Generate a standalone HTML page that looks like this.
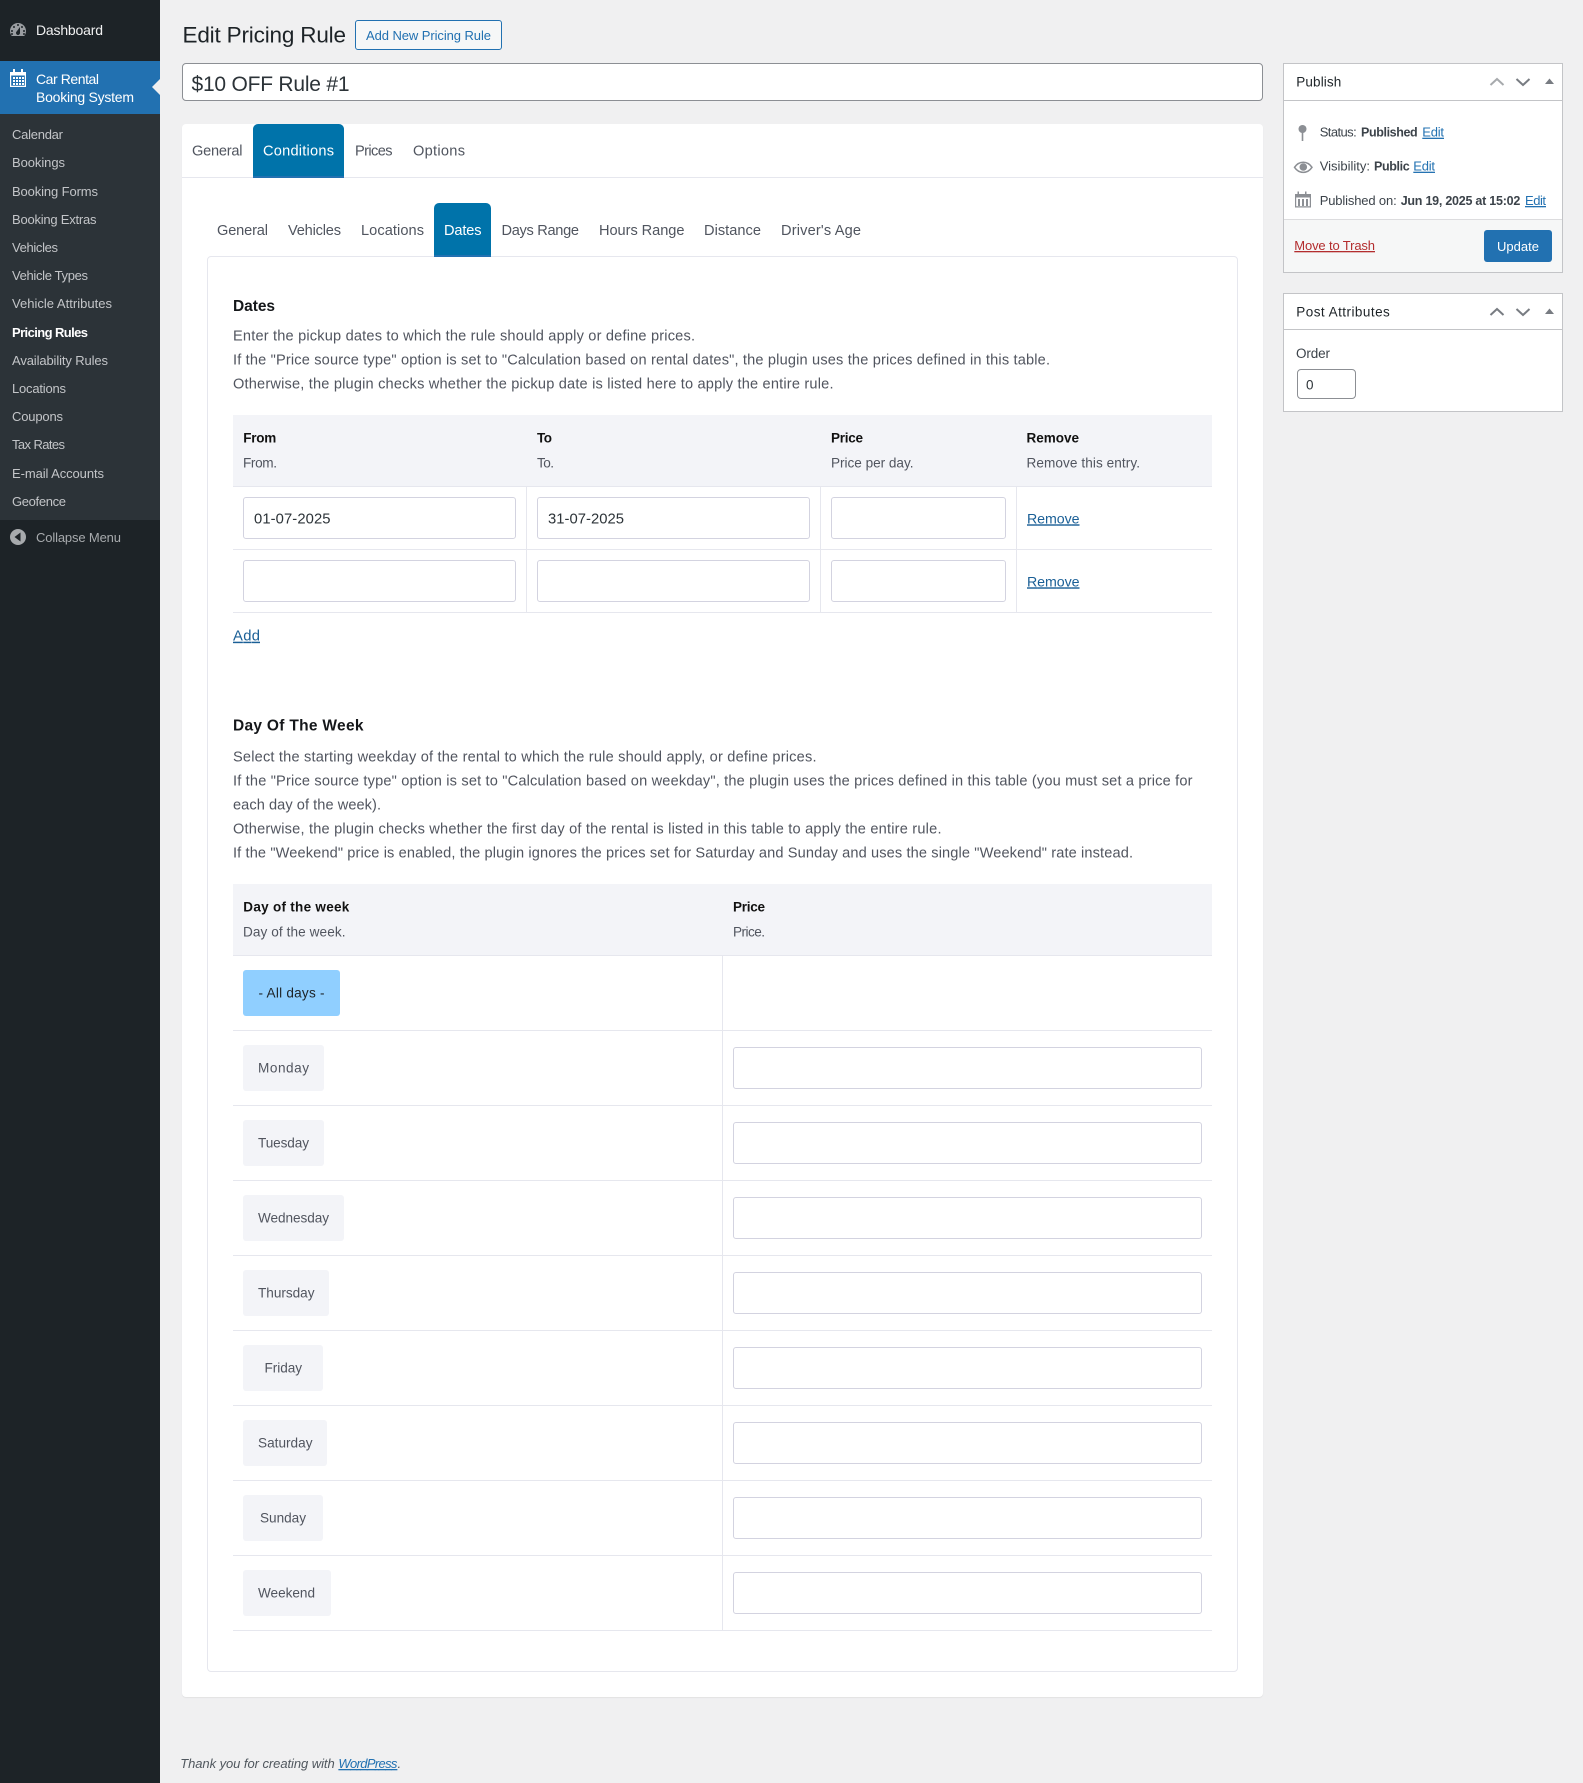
<!DOCTYPE html>
<html lang="en">
<head>
<meta charset="utf-8">
<title>Edit Pricing Rule</title>
<style>
html,body{margin:0;padding:0;width:1583px;height:1783px;overflow:hidden;background:#f0f0f1;font-family:"Liberation Sans",sans-serif}
.b{position:absolute;box-sizing:border-box}
input.b{background:#fff;border:1px solid #d3d3e0;border-radius:3px;margin:0;padding:0;outline:0}
.pill{background:#f3f4f8;border-radius:3px}
.ln{background:#e6e7ee}
svg.t{position:absolute;left:0;top:0;pointer-events:none}
svg text{font-family:"Liberation Sans",sans-serif;font-size:14.6px;fill:#51555f;white-space:pre}
.m{font-size:13px;fill:#c3c5c8}
.s{font-size:13.6px}
.h{font-size:13.5px;font-weight:bold;fill:#111}
.tb{font-size:14.6px;fill:#50555f}
.hd{font-size:15.5px;font-weight:bold;fill:#15171a}
.lk{font-size:14.2px;fill:#1a5f96;text-decoration:underline}
.sd{font-size:13px;fill:#3c434a}
.sl{font-size:13px;fill:#2271b1;text-decoration:underline}
.sb{font-size:12.5px;fill:#3c434a;font-weight:bold}
</style>
</head>
<body>
<!-- sidebar -->
<div class="b" style="left:0;top:0;width:160px;height:1783px;background:#1d2327"></div>
<div class="b" style="left:0;top:61px;width:160px;height:53px;background:#2271b1"></div>
<div class="b" style="left:0;top:114px;width:160px;height:406px;background:#2c3338"></div>

<!-- header button + title -->
<div class="b" style="left:355px;top:20px;width:147px;height:30px;border:1px solid #2271b1;border-radius:3px;background:#f6f7f7"></div>
<div class="b" style="left:182px;top:63px;width:1081px;height:38px;border:1px solid #8c8f94;border-radius:4px;background:#fff"></div>

<!-- main panel -->
<div class="b" style="left:182px;top:124px;width:1081px;height:1573px;background:#fff;border-radius:4px;box-shadow:0 1px 1px rgba(0,0,0,.06)"></div>
<div class="b ln" style="left:182px;top:177px;width:1081px;height:1px"></div>
<div class="b" style="left:253px;top:124px;width:91px;height:54px;background:#0073aa;border-radius:5px 5px 0 0;border-bottom:2px solid #2271b1"></div>
<div class="b" style="left:207px;top:256px;width:1031px;height:1416px;border:1px solid #e6e7ee;border-radius:4px;background:#fff"></div>
<div class="b" style="left:434px;top:203px;width:57px;height:54px;background:#0073aa;border-radius:5px 5px 0 0;border-bottom:2px solid #2271b1"></div>

<!-- dates table -->
<div class="b" style="left:233px;top:415px;width:979px;height:71px;background:#f3f4f8"></div>
<div class="b ln" style="left:233px;top:486px;width:979px;height:1px"></div>
<div class="b ln" style="left:233px;top:549px;width:979px;height:1px"></div>
<div class="b ln" style="left:233px;top:612px;width:979px;height:1px"></div>
<div class="b ln" style="left:526px;top:487px;width:1px;height:125px"></div>
<div class="b ln" style="left:820px;top:487px;width:1px;height:125px"></div>
<div class="b ln" style="left:1016px;top:487px;width:1px;height:125px"></div>
<input class="b" readonly style="left:243px;top:497px;width:273px;height:42px">
<input class="b" readonly style="left:537px;top:497px;width:273px;height:42px">
<input class="b" readonly style="left:831px;top:497px;width:175px;height:42px">
<input class="b" readonly style="left:243px;top:560px;width:273px;height:42px">
<input class="b" readonly style="left:537px;top:560px;width:273px;height:42px">
<input class="b" readonly style="left:831px;top:560px;width:175px;height:42px">

<!-- weekday table -->
<div class="b" style="left:233px;top:884px;width:979px;height:71px;background:#f3f4f8"></div>
<div class="b ln" style="left:233px;top:955px;width:979px;height:1px"></div>
<div class="b ln" style="left:722px;top:956px;width:1px;height:675px"></div>
<div class="b ln" style="left:233px;top:1030px;width:979px;height:1px"></div>
<div class="b ln" style="left:233px;top:1105px;width:979px;height:1px"></div>
<div class="b ln" style="left:233px;top:1180px;width:979px;height:1px"></div>
<div class="b ln" style="left:233px;top:1255px;width:979px;height:1px"></div>
<div class="b ln" style="left:233px;top:1330px;width:979px;height:1px"></div>
<div class="b ln" style="left:233px;top:1405px;width:979px;height:1px"></div>
<div class="b ln" style="left:233px;top:1480px;width:979px;height:1px"></div>
<div class="b ln" style="left:233px;top:1555px;width:979px;height:1px"></div>
<div class="b ln" style="left:233px;top:1630px;width:979px;height:1px"></div>
<div class="b" style="left:243px;top:970px;width:97px;height:46px;background:#90cfff;border-radius:3px"></div>
<div class="b pill" style="left:243px;top:1045px;width:81px;height:46px"></div>
<div class="b pill" style="left:243px;top:1120px;width:81px;height:46px"></div>
<div class="b pill" style="left:243px;top:1195px;width:101px;height:46px"></div>
<div class="b pill" style="left:243px;top:1270px;width:86px;height:46px"></div>
<div class="b pill" style="left:243px;top:1345px;width:80px;height:46px"></div>
<div class="b pill" style="left:243px;top:1420px;width:84px;height:46px"></div>
<div class="b pill" style="left:243px;top:1495px;width:80px;height:46px"></div>
<div class="b pill" style="left:243px;top:1570px;width:88px;height:46px"></div>
<input class="b" readonly style="left:733px;top:1047px;width:469px;height:42px">
<input class="b" readonly style="left:733px;top:1122px;width:469px;height:42px">
<input class="b" readonly style="left:733px;top:1197px;width:469px;height:42px">
<input class="b" readonly style="left:733px;top:1272px;width:469px;height:42px">
<input class="b" readonly style="left:733px;top:1347px;width:469px;height:42px">
<input class="b" readonly style="left:733px;top:1422px;width:469px;height:42px">
<input class="b" readonly style="left:733px;top:1497px;width:469px;height:42px">
<input class="b" readonly style="left:733px;top:1572px;width:469px;height:42px">

<!-- side boxes -->
<div class="b" style="left:1283px;top:63px;width:280px;height:210px;background:#fff;border:1px solid #c3c4c7"></div>
<div class="b" style="left:1284px;top:100px;width:278px;height:1px;background:#c3c4c7"></div>
<div class="b" style="left:1284px;top:219px;width:278px;height:53px;background:#f6f7f7;border-top:1px solid #dcdcde"></div>
<div class="b" style="left:1484px;top:230px;width:68px;height:32px;background:#2271b1;border-radius:3px"></div>
<div class="b" style="left:1283px;top:293px;width:280px;height:119px;background:#fff;border:1px solid #c3c4c7"></div>
<div class="b" style="left:1284px;top:329px;width:278px;height:1px;background:#c3c4c7"></div>
<div class="b" style="left:1297px;top:369px;width:59px;height:30px;background:#fff;border:1px solid #8c8f94;border-radius:4px"></div>

<svg class="t" width="1583" height="1783" viewBox="0 0 1583 1783" xmlns="http://www.w3.org/2000/svg">
<!-- sidebar icons -->
<path transform="translate(8 20)" fill="#9a9da1" fill-rule="evenodd" d="M3.76 16h12.48c1.1-1.37 1.76-3.11 1.76-5 0-4.42-3.58-8-8-8s-8 3.58-8 8c0 1.89.66 3.63 1.76 5zM10 4c.55 0 1 .45 1 1s-.45 1-1 1-1-.45-1-1 .45-1 1-1zM6 6c.55 0 1 .45 1 1s-.45 1-1 1-1-.45-1-1 .45-1 1-1zm8 0c.55 0 1 .45 1 1s-.45 1-1 1-1-.45-1-1 .45-1 1-1zm-5.37 5.55L12 7v6c0 1.1-.9 2-2 2s-2-.9-2-2c0-.57.24-1.08.63-1.45zM4 10c.55 0 1 .45 1 1s-.45 1-1 1-1-.45-1-1 .45-1 1-1zm12 0c.55 0 1 .45 1 1s-.45 1-1 1-1-.45-1-1 .45-1 1-1zm-12 3c.55 0 1 .45 1 1s-.45 1-1 1-1-.45-1-1 .45-1 1-1zm12 0c.55 0 1 .45 1 1s-.45 1-1 1-1-.45-1-1 .45-1 1-1z"/>
<g fill="#fff">
<path fill-rule="evenodd" d="M10 72h3v-3h2v3h6v-3h2v3h3v15H10zM11.2 75.500v10.300h13.600V75.500z"/>
<rect x="13" y="77" width="2" height="2"/><rect x="16" y="77" width="2" height="2"/><rect x="19" y="77" width="2" height="2"/><rect x="22" y="77" width="2" height="2"/>
<rect x="13" y="80" width="2" height="2"/><rect x="16" y="80" width="2" height="2"/><rect x="19" y="80" width="2" height="2"/><rect x="22" y="80" width="2" height="2"/>
<rect x="13" y="83" width="2" height="2"/><rect x="16" y="83" width="2" height="2"/><rect x="19" y="83" width="2" height="2"/><rect x="22" y="83" width="2" height="2"/>
</g>
<path d="M160 79L152 87L160 95Z" fill="#f0f0f1"/>
<circle cx="18" cy="537" r="8" fill="#a7aaad"/>
<path d="M20.500 532.500v9l-6-4.500z" fill="#1d2327"/>

<!-- sidebar text -->
<text x="36" y="35" textLength="67" style="font-size:14px;fill:#f0f0f1">Dashboard</text>
<text x="36" y="84" textLength="63" style="font-size:14px;fill:#fff">Car Rental</text>
<text x="36" y="102" textLength="98" style="font-size:14px;fill:#fff">Booking System</text>
<text class="m" x="12" y="139" textLength="51">Calendar</text>
<text class="m" x="12" y="167" textLength="53">Bookings</text>
<text class="m" x="12" y="196" textLength="86">Booking Forms</text>
<text class="m" x="12" y="224" textLength="84.500">Booking Extras</text>
<text class="m" x="12" y="252" textLength="46">Vehicles</text>
<text class="m" x="12" y="280" textLength="76">Vehicle Types</text>
<text class="m" x="12" y="308" textLength="100">Vehicle Attributes</text>
<text class="m" x="12" y="337" textLength="76" style="font-weight:bold;fill:#fff">Pricing Rules</text>
<text class="m" x="12" y="365" textLength="96">Availability Rules</text>
<text class="m" x="12" y="393" textLength="54">Locations</text>
<text class="m" x="12" y="421" textLength="51">Coupons</text>
<text class="m" x="12" y="449" textLength="53">Tax Rates</text>
<text class="m" x="12" y="478" textLength="92">E-mail Accounts</text>
<text class="m" x="12" y="506" textLength="54">Geofence</text>
<text class="m" x="36" y="542" textLength="85" style="fill:#a7aaad">Collapse Menu</text>

<!-- title -->
<text x="182.500" y="42.500" textLength="163.500" style="font-size:22.500px;fill:#1d2327">Edit Pricing Rule</text>
<text x="366" y="40" textLength="125" style="font-size:13px;fill:#2271b1">Add New Pricing Rule</text>
<text x="191.500" y="91" textLength="158" style="font-size:21px;fill:#2c3338">$10 OFF Rule #1</text>

<!-- tabs -->
<text class="tb" x="192" y="155.500" textLength="50.500">General</text>
<text class="tb" x="263" y="155.500" textLength="71" style="fill:#fff">Conditions</text>
<text class="tb" x="355" y="155.500" textLength="37.500">Prices</text>
<text class="tb" x="413" y="155.500" textLength="52">Options</text>
<text class="tb" x="217" y="235" textLength="51">General</text>
<text class="tb" x="288" y="235" textLength="53">Vehicles</text>
<text class="tb" x="361" y="235" textLength="63">Locations</text>
<text class="tb" x="444" y="235" textLength="37.500" style="fill:#fff">Dates</text>
<text class="tb" x="501.500" y="235" textLength="77.500">Days Range</text>
<text class="tb" x="599" y="235" textLength="85.500">Hours Range</text>
<text class="tb" x="704" y="235" textLength="57">Distance</text>
<text class="tb" x="781" y="235" textLength="80">Driver's Age</text>

<!-- dates -->
<text class="hd" x="233" y="311" textLength="42">Dates</text>
<text x="233" y="340.700" textLength="462">Enter the pickup dates to which the rule should apply or define prices.</text>
<text x="233" y="364.700" textLength="817">If the "Price source type" option is set to "Calculation based on rental dates", the plugin uses the prices defined in this table.</text>
<text x="233" y="388.700" textLength="600.500">Otherwise, the plugin checks whether the pickup date is listed here to apply the entire rule.</text>

<text class="h" x="243.300" y="442.300" textLength="33">From</text>
<text class="s" x="243" y="467.300" textLength="34">From.</text>
<text class="h" x="537" y="442.300" textLength="15">To</text>
<text class="s" x="537" y="467.300" textLength="17">To.</text>
<text class="h" x="831" y="442.300" textLength="32">Price</text>
<text class="s" x="831" y="467.300" textLength="82.500">Price per day.</text>
<text class="h" x="1026.500" y="442.300" textLength="52.500">Remove</text>
<text class="s" x="1026.500" y="467.300" textLength="113.500">Remove this entry.</text>

<text x="254" y="523.300" textLength="76.500" style="font-size:14.800px;fill:#2c3338">01-07-2025</text>
<text x="548" y="523.300" textLength="76" style="font-size:14.800px;fill:#2c3338">31-07-2025</text>
<text class="lk" x="1027" y="523.300" textLength="52.500">Remove</text>
<text class="lk" x="1027" y="586.300" textLength="52.500">Remove</text>
<text class="lk" x="233" y="640.700" textLength="27" style="font-size:14.800px">Add</text>

<!-- weekday -->
<text class="hd" x="233" y="730.700" textLength="130.500">Day Of The Week</text>
<text x="233" y="761.700" textLength="583.500">Select the starting weekday of the rental to which the rule should apply, or define prices.</text>
<text x="233" y="785.700" textLength="959.500">If the "Price source type" option is set to "Calculation based on weekday", the plugin uses the prices defined in this table (you must set a price for</text>
<text x="233" y="809.700" textLength="148">each day of the week).</text>
<text x="233" y="833.700" textLength="708.500">Otherwise, the plugin checks whether the first day of the rental is listed in this table to apply the entire rule.</text>
<text x="233" y="857.700" textLength="900">If the "Weekend" price is enabled, the plugin ignores the prices set for Saturday and Sunday and uses the single "Weekend" rate instead.</text>

<text class="h" x="243.300" y="911.300" textLength="106">Day of the week</text>
<text class="s" x="243" y="936.300" textLength="102.500">Day of the week.</text>
<text class="h" x="733" y="911.300" textLength="32">Price</text>
<text class="s" x="733" y="936.300" textLength="32">Price.</text>

<text class="s" x="258.500" y="997.300" textLength="66" style="fill:#1d2327">- All days -</text>
<text class="s" x="258" y="1072.300" textLength="51">Monday</text>
<text class="s" x="258" y="1147.300" textLength="51">Tuesday</text>
<text class="s" x="258" y="1222.300" textLength="71">Wednesday</text>
<text class="s" x="258" y="1297.300" textLength="56.500">Thursday</text>
<text class="s" x="264.500" y="1372.300" textLength="37.500">Friday</text>
<text class="s" x="258" y="1447.300" textLength="54.500">Saturday</text>
<text class="s" x="260" y="1522.300" textLength="46">Sunday</text>
<text class="s" x="258" y="1597.300" textLength="57">Weekend</text>

<!-- footer -->
<text x="180.200" y="1768" textLength="154.500" style="font-size:13px;font-style:italic;fill:#50575e">Thank you for creating with</text>
<text x="338.400" y="1768" textLength="59" style="font-size:13px;font-style:italic;fill:#2271b1;text-decoration:underline">WordPress</text>
<text x="397.500" y="1768" style="font-size:13px;font-style:italic;fill:#50575e">.</text>

<!-- publish box -->
<text x="1296.300" y="86.700" textLength="45" style="font-size:13.500px;fill:#1d2327">Publish</text>
<path d="M1490.500 85L1497 79L1503.500 85" fill="none" stroke="#a7aaad" stroke-width="2"/>
<path d="M1516.500 79L1523 85L1529.500 79" fill="none" stroke="#787c82" stroke-width="2"/>
<path d="M1545 84L1549.500 78.500L1554 84Z" fill="#787c82"/>

<circle cx="1302.500" cy="129" r="4" fill="#8c8f94"/>
<rect x="1301.700" y="131" width="1.600" height="10" fill="#8c8f94"/>
<path d="M1294.500 167.300C1299 160.500 1307.500 160.500 1312 167.300C1307.500 174 1299 174 1294.500 167.300Z" fill="none" stroke="#8c8f94" stroke-width="1.500"/>
<circle cx="1303.300" cy="167" r="3.800" fill="#8c8f94"/>
<path fill="#8c8f94" fill-rule="evenodd" d="M1295 194h2.500v-2.500h1.500v2.500h6v-2.500h1.500v2.500h4.500v13.500h-16zM1296.200 197.500v8.800h13.600v-8.800z"/>
<rect x="1298" y="199" width="2" height="7" fill="#8c8f94"/><rect x="1302" y="199" width="2" height="7" fill="#8c8f94"/><rect x="1306" y="199" width="2" height="7" fill="#8c8f94"/>

<text class="sd" x="1319.700" y="136.700" textLength="37">Status:</text>
<text class="sb" x="1361" y="136.700" textLength="56.700">Published</text>
<text class="sl" x="1422.300" y="136.700" textLength="21.700">Edit</text>
<text class="sd" x="1319.700" y="170.700" textLength="50.300">Visibility:</text>
<text class="sb" x="1374" y="170.700" textLength="35.700">Public</text>
<text class="sl" x="1413.300" y="170.700" textLength="21.700">Edit</text>
<text class="sd" x="1319.700" y="205" textLength="77">Published on:</text>
<text class="sb" x="1400.700" y="205" textLength="119.600">Jun 19, 2025 at 15:02</text>
<text class="sl" x="1525" y="205" textLength="21">Edit</text>
<text x="1294.300" y="250" textLength="80.700" style="font-size:13px;fill:#b32d2e;text-decoration:underline">Move to Trash</text>
<text x="1497" y="251" textLength="42" style="font-size:13px;fill:#fff">Update</text>

<!-- post attributes -->
<text x="1296.300" y="316.700" textLength="93.500" style="font-size:13.500px;fill:#1d2327">Post Attributes</text>
<path d="M1490.500 315L1497 309L1503.500 315" fill="none" stroke="#787c82" stroke-width="2"/>
<path d="M1516.500 309L1523 315L1529.500 309" fill="none" stroke="#787c82" stroke-width="2"/>
<path d="M1545 314L1549.500 308.500L1554 314Z" fill="#787c82"/>
<text class="sd" x="1296" y="358" textLength="34" style="font-size:13.500px">Order</text>
<text x="1306" y="389.700" textLength="7.500" style="font-size:13.500px;fill:#2c3338">0</text>
</svg>
</body>
</html>
